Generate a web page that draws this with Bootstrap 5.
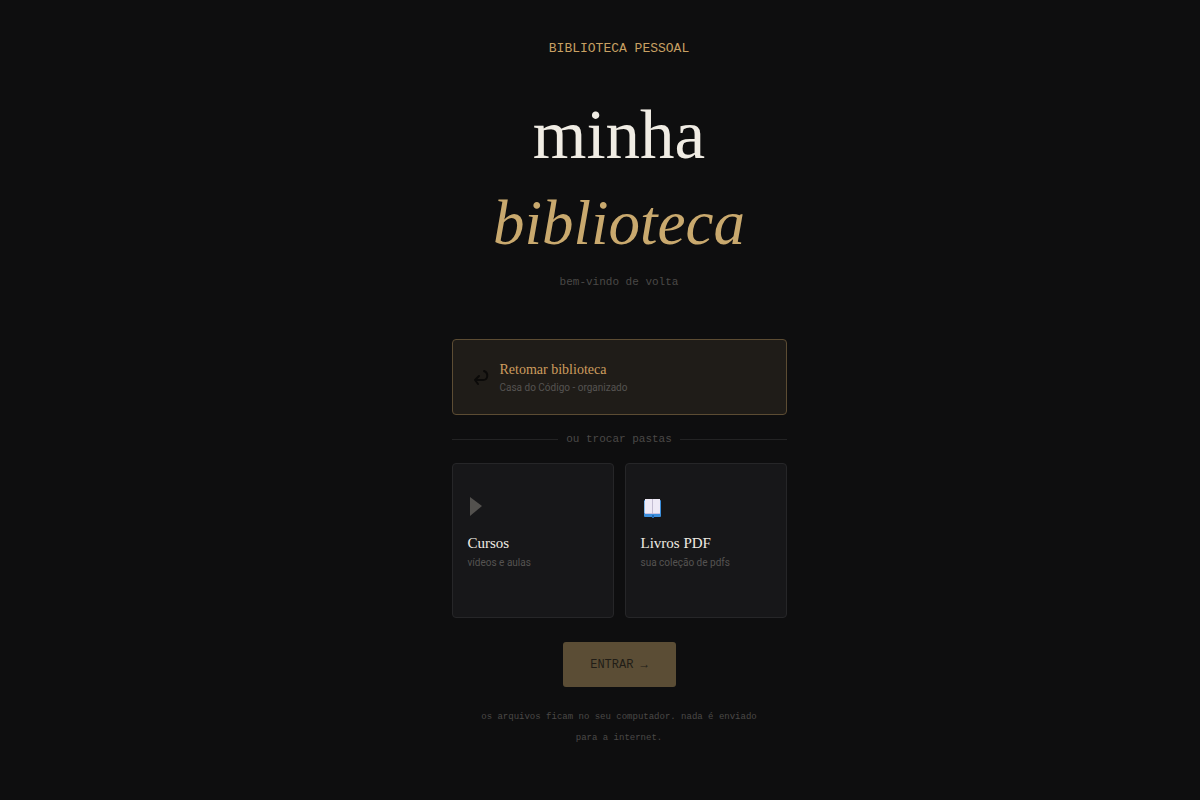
<!DOCTYPE html>
<html lang="pt-BR">
<head>
<meta charset="utf-8">
<meta name="viewport" content="width=device-width, initial-scale=1">
<title>minha biblioteca</title>
<link href="https://cdn.jsdelivr.net/npm/bootstrap@5.3.0/dist/css/bootstrap.min.css" rel="stylesheet">
<style>
  body { background: #0e0e0f; color: #f0ece4; font-family: Roboto, "Liberation Sans", sans-serif; }
  .welcome { padding: 41px 0 48px 38px; }
  .panel { width: 100%; max-width: 335px; }
  .mono { font-family: "Liberation Mono", monospace; font-size: 11px; line-height: 16px; color: #4b4947; }
  .serif { font-family: "Liberation Serif", serif; }
  .eyebrow { font-size: 13px; color: #c8a063; }
  .title { font-size: 69px; line-height: 86px; font-weight: 400; margin-top: 35px; color: #f0ece4; }
  .title em { font-size: 63px; color: #c9a96e; }
  .tile { background: #171719; border: 1px solid #262628; border-radius: 4px; color: #f0ece4; }
  .tile:hover { border-color: #c9a96e; }
  .resume { background: #1f1c18; border-color: #5c4c33; height: 76px; padding: 2px 20px 0; margin-top: 49px; gap: 11px; }
  .resume .tile-name { font-size: 14px; color: #cd9d5e; }
  .source { flex: 1 1 0; height: 155px; padding: 31px 15px; }
  .source svg { height: 24px; margin-bottom: 14px; }
  .source .tile-note { margin-top: 2px; }
  .tile-name { font-size: 15px; line-height: 20px; }
  .tile-note { font-size: 10px; line-height: 16px; color: #555351; }
  .sources { gap: 11px; }
  .rule { height: 1px; background: #232324; }
  .enter { background: #5b4d35; color: #211d17; border: 0; border-radius: 3px; width: 113px; height: 45px; font-size: 12px; }
  .privacy { font-size: 9px; line-height: 21px; padding: 0 24px; margin-top: 20px; }
</style>
</head>
<body>
<main class="welcome d-flex justify-content-center">
  <div class="panel d-flex flex-column">
    <header class="text-center">
      <p class="mono eyebrow mb-0">BIBLIOTECA PESSOAL</p>
      <h1 class="title serif mb-0">minha<br><em>biblioteca</em></h1>
      <p class="mono mb-0 mt-2">bem-vindo de volta</p>
    </header>

    <button type="button" class="tile resume d-flex align-items-center text-start">
      <svg width="16" height="18" viewBox="0 0 16 18" fill="none" stroke="#0b0a09" stroke-width="2" stroke-linecap="round" stroke-linejoin="round" aria-hidden="true"><path d="M11 2C16 4 15 11 10 11H2M6 7L2 11L5 15"/></svg>
      <span>
        <span class="tile-name serif d-block">Retomar biblioteca</span>
        <span class="tile-note d-block">Casa do Código - organizado</span>
      </span>
    </button>

    <div class="d-flex align-items-center gap-2 my-3">
      <span class="rule flex-grow-1"></span>
      <span class="mono">ou trocar pastas</span>
      <span class="rule flex-grow-1"></span>
    </div>

    <div class="sources d-flex">
      <button type="button" class="tile source text-start d-flex flex-column">
        <svg width="16" viewBox="0 0 16 24" aria-hidden="true"><path d="M2 2V21L14 11Z" fill="#53514e"/></svg>
        <span class="tile-name serif">Cursos</span>
        <span class="tile-note">vídeos e aulas</span>
      </button>
      <button type="button" class="tile source text-start d-flex flex-column">
        <svg width="24" viewBox="0 0 24 24" aria-hidden="true">
          <rect x="3" y="5" width="17" height="17" rx="1" fill="#3c8fdc"/>
          <path d="M3 6H5V18H3Z" fill="#86b9e8"/>
          <path d="M4 4H19V19H4Z" fill="#eeeaf6"/>
          <path d="M4 18H19V19H4Z" fill="#cbc5e4"/>
          <path d="M11 4H12V19H11Z" fill="#c3bdd2"/>
          <path d="M11 20H13V23H11Z" fill="#236ab5"/>
        </svg>
        <span class="tile-name serif">Livros PDF</span>
        <span class="tile-note">sua coleção de pdfs</span>
      </button>
    </div>

    <button type="button" class="mono enter align-self-center mt-4">ENTRAR →</button>
    <p class="mono privacy text-center mb-0">os arquivos ficam no seu computador. nada é enviado para a internet.</p>
  </div>
</main>
<script src="https://cdn.jsdelivr.net/npm/bootstrap@5.3.0/dist/js/bootstrap.bundle.min.js"></script>
</body>
</html>
